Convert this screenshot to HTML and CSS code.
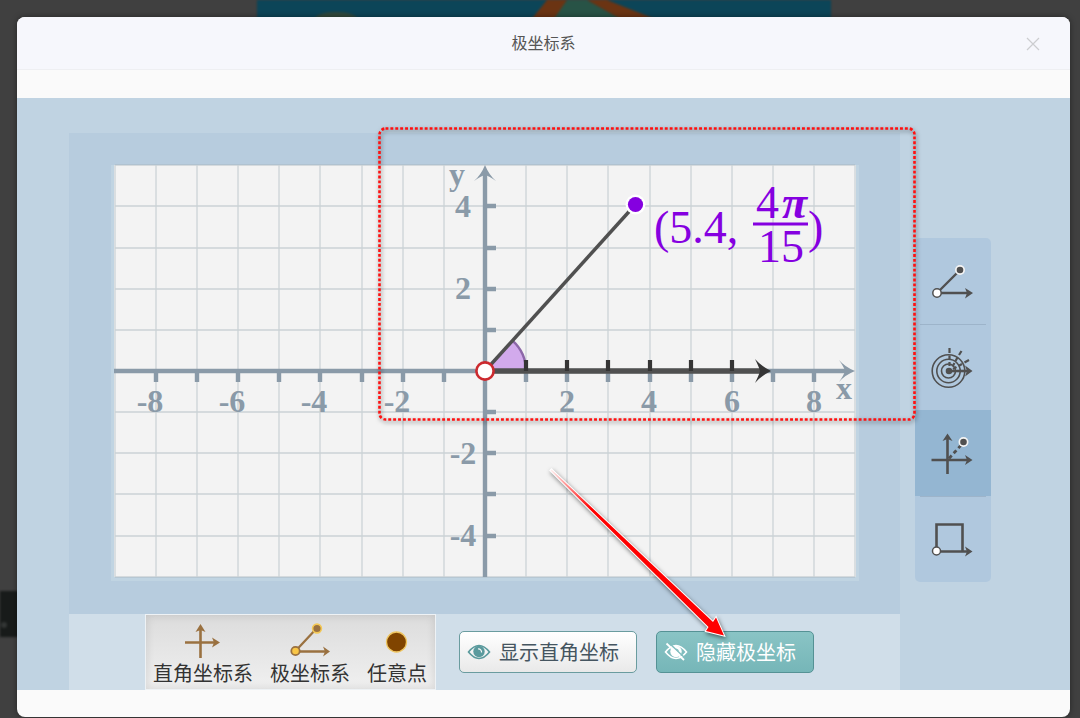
FILE: index.html
```
<!DOCTYPE html>
<html lang="zh-CN">
<head>
  <meta charset="UTF-8">
  <meta name="viewport" content="width=device-width, initial-scale=1">
  <title>极坐标系</title>
  <link rel="stylesheet" href="styles.css">
</head>
<body>
  <!-- dimmed page behind the dialog -->
  <svg class="backdrop" viewBox="0 0 1080 718" preserveAspectRatio="xMidYMin slice" aria-hidden="true">
    <rect x="257" y="-10" width="574" height="60" fill="#0c4558"/>
    <ellipse cx="336" cy="20" rx="22" ry="8" fill="#32493c"/>
    <path d="M567 0H587L640 30H540Z" fill="#285346"/>
    <path d="M547 0H567L542 36H518Z" fill="#6b3413"/>
    <path d="M587 0H607L660 21H624Z" fill="#6b3413"/>
    <rect x="-10" y="591" width="60" height="46" fill="#181b1a"/>
    <circle cx="4" cy="625" r="3" fill="#333635"/>
  </svg>

  <div class="dialog" role="dialog" aria-labelledby="dialogTitle">
    <header class="dialog-header">
      <h1 class="dialog-title" id="dialogTitle">极坐标系</h1>
      <button type="button" class="close-btn" id="closeBtn" aria-label="关闭">
        <svg width="14" height="14" viewBox="0 0 14 14"><path d="M1 1L13 13M13 1L1 13" stroke="#cccdd0" stroke-width="1.2"/></svg>
      </button>
    </header>

    <div class="stage">
      <main class="workspace">
        <div class="board">
          <svg class="chart" viewBox="-374 -206 748 416" role="img" aria-label="坐标系">
            <rect x="-374" y="-206" width="748" height="416" fill="#c0d4e2"/>
            <rect x="-371" y="-206" width="742" height="412" fill="#f3f3f3"/>
            <path class="grid" d="M-370-206V206M-329-206V206M-288-206V206M-247-206V206M-206-206V206M-165-206V206M-123-206V206M-82-206V206M-41-206V206M41-206V206M82-206V206M123-206V206M165-206V206M206-206V206M247-206V206M288-206V206M329-206V206M370-206V206M-370-206H370M-370-165H370M-370-123H370M-370-82H370M-370-41H370M-370 41H370M-370 82H370M-370 123H370M-370 165H370M-370 206H370"/>

            <path class="axis" d="M-371 0H362M0 206V-197"/>
            <path class="axis" d="M-329 0V11M-288 0V11M-247 0V11M-206 0V11M-165 0V11M-123 0V11M-82 0V11M-41 0V11M41 0V11M82 0V11M123 0V11M165 0V11M206 0V11M247 0V11M288 0V11M329 0V11"/>
            <path class="axis" d="M0-165H11M0-123H11M0-82H11M0-41H11M0 41H11M0 82H11M0 123H11M0 165H11"/>
            <path d="M370 0Q360-4 354-11Q359-4 360 0Q359 4 354 11Q360 4 370 0Z" fill="#8a9aa8"/>
            <path d="M0-206Q-4-196-11-190Q-4-195 0-196Q4-195 11-190Q4-196 0-206Z" fill="#8a9aa8"/>

            <g class="axis-label">
              <text x="-335" y="41">-8</text>
              <text x="-253" y="41">-6</text>
              <text x="-171" y="41">-4</text>
              <text x="-88" y="41">-2</text>
              <text x="82" y="41">2</text>
              <text x="164" y="41">4</text>
              <text x="247" y="41">6</text>
              <text x="329" y="41">8</text>
              <text x="359" y="28">x</text>
              <text x="-28" y="-186">y</text>
              <text x="-22" y="-154">4</text>
              <text x="-22" y="-72">2</text>
              <text x="-22" y="93">-2</text>
              <text x="-22" y="175">-4</text>
            </g>

            <!-- angle, polar axis and radius -->
            <path d="M0 0H41A41 41 0 0 0 27.5-30.4Z" fill="#d2aaec"/>
            <path d="M41 0A41 41 0 0 0 27.5-30.4" fill="none" stroke="#8c67a8" stroke-width="2.5"/>
            <path d="M0 0L150-166" stroke="#505050" stroke-width="3.5"/>
            <path d="M0 0H277" stroke="#505050" stroke-width="5.5"/>
            <path d="M41 0V-11M82 0V-11M123 0V-11M165 0V-11M206 0V-11M247 0V-11" stroke="#353535" stroke-width="4.2"/>
            <path d="M286 0Q276-5 270-12Q274-4 275 0Q274 4 270 12Q276 5 286 0Z" fill="#353535"/>
            <circle r="8.6" fill="#fff" stroke="#cc2a2f" stroke-width="2.6"/>
            <circle cx="150.500" cy="-166.500" r="10" fill="#fff"/>
            <circle cx="150.500" cy="-166.500" r="7.600" fill="#8500e0"/>

            <g class="coord">
              <text x="169" y="-128">(5.4,</text>
              <text x="271" y="-153">4<tspan class="pi" x="297">π</tspan></text>
              <path d="M268-147H323" stroke="#8500e0" stroke-width="3"/>
              <text x="273" y="-109">15</text>
              <text x="323" y="-128">)</text>
            </g>
          </svg>
        </div>

        <div class="toolbar">
          <div class="palette">
            <button type="button" class="palette-item">
              <svg width="44" height="40" viewBox="0 0 44 40">
                <path d="M4 24.500H33M19.500 40V11" stroke="#9a7140" stroke-width="2.600"/>
                <path d="M39 24.500L31 19.500L33 24.500L31 29.500ZM19.500 6L14.500 14L19.500 12L24.500 14Z" fill="#9a7140"/>
              </svg>
              直角坐标系
            </button>
            <button type="button" class="palette-item">
              <svg width="44" height="40" viewBox="0 0 44 40">
                <path d="M7.500 33L29 10M7.500 33.500H37" stroke="#9a7140" stroke-width="2.300"/>
                <path d="M42 33.500L35 28.500L37 33.500L35 38.500Z" fill="#9a7140"/>
                <circle cx="7.500" cy="33" r="4.200" fill="#f9c646" stroke="#9a7140" stroke-width="1.800"/>
                <circle cx="29" cy="10.500" r="4.400" fill="#9a7140" stroke="#f4c855" stroke-width="1.600"/>
              </svg>
              极坐标系
            </button>
            <button type="button" class="palette-item">
              <svg width="44" height="40" viewBox="0 0 44 40">
                <circle cx="21.500" cy="24" r="10" fill="#804400" stroke="#efc560" stroke-width="1.300"/>
              </svg>
              任意点
            </button>
          </div>

          <button type="button" class="btn" id="rectBtn">
            <svg class="eye" width="24" height="18" viewBox="0 0 24 18">
              <path d="M1.500 9Q12-4 22.500 9Q12 22 1.500 9Z" fill="none" stroke="currentColor" stroke-width="1.600"/>
              <circle cx="12" cy="8.500" r="5.700" fill="currentColor"/>
              <path d="M11 6A3 3 0 0 1 14.500 9.500" fill="none" stroke="#fafafa" stroke-width="1.200"/>
            </svg>
            显示直角坐标
          </button>
          <button type="button" class="btn btn-active" id="polarBtn">
            <svg class="eye" width="24" height="18" viewBox="0 0 24 18">
              <path d="M1.500 9Q12-4 22.500 9Q12 22 1.500 9Z" fill="none" stroke="currentColor" stroke-width="1.600"/>
              <circle cx="12" cy="8.500" r="5.700" fill="currentColor"/>
              <path d="M12 6A3 3 0 0 1 14.500 8.500" fill="none" stroke="#80bdbe" stroke-width="1.200"/>
              <path d="M4.500-.5L21.500 15.500" stroke="#80bdbe" stroke-width="1.400"/>
              <path d="M2.500 .5L20 17" stroke="currentColor" stroke-width="1.800"/>
            </svg>
            隐藏极坐标
          </button>
        </div>
      </main>

      <nav class="tools" aria-label="工具">
        <button type="button" class="tool" aria-label="极坐标点">
          <svg width="76" height="86" viewBox="0 0 76 86">
            <path d="M22 55L45 32M22 55H53" stroke="#505050" stroke-width="2.400"/>
            <path d="M58 55L50 50L52 55L50 60.500Z" fill="#505050"/>
            <circle cx="22" cy="55" r="4.200" fill="#fff" stroke="#505050" stroke-width="1.500"/>
            <circle cx="45" cy="32" r="5" fill="#f4f4f4"/>
            <circle cx="45" cy="32" r="3.300" fill="#505050"/>
          </svg>
        </button>
        <button type="button" class="tool" aria-label="极坐标网格">
          <svg width="76" height="86" viewBox="0 0 76 86">
            <g fill="none" stroke="#505050">
              <circle cx="33.500" cy="47" r="16.300" stroke-width="1.600"/>
              <circle cx="33.500" cy="47" r="11.700" stroke-width="1.600"/>
              <circle cx="33.500" cy="47" r="7" stroke-width="1.600"/>
              <path d="M34.500 24V29M34.500 31.500V35.500M34.500 38V42M46.500 27L44 31M42.500 33.500L40.500 37M39.500 39L37.500 42.500M54 36L49.500 38.500M47 40L43.500 42M41.500 43L38 45" stroke-width="2.200"/>
              <path d="M34 47H53" stroke-width="2.600"/>
            </g>
            <circle cx="34" cy="47" r="3.300" fill="#505050"/>
            <path d="M57.500 47L50 41.500L52 47L50 52.500Z" fill="#505050"/>
          </svg>
        </button>
        <button type="button" class="tool tool-active" aria-label="直角坐标与极坐标" aria-pressed="true">
          <svg width="76" height="86" viewBox="0 0 76 86">
            <path d="M16.500 50H53M32.500 64V28" stroke="#505050" stroke-width="2.600"/>
            <path d="M57.500 50L50 45L52 50L50 55ZM32.500 23.500L27.500 31L32.500 29L37.500 31Z" fill="#505050"/>
            <path d="M34 48.500L48 33" stroke="#505050" stroke-width="2.800" stroke-dasharray="4 3"/>
            <circle cx="48.500" cy="32" r="5" fill="#f4f4f4"/>
            <circle cx="48.500" cy="32" r="3.300" fill="#505050"/>
          </svg>
        </button>
        <button type="button" class="tool" aria-label="正方形">
          <svg width="76" height="86" viewBox="0 0 76 86">
            <path d="M21.500 55V28.500H47.500V55M21.500 55.500H52" fill="none" stroke="#505050" stroke-width="2.600"/>
            <path d="M57.500 55.500L50 50.500L52 55.500L50 60.500Z" fill="#505050"/>
            <circle cx="21.500" cy="55" r="4" fill="#fff" stroke="#505050" stroke-width="1.500"/>
          </svg>
        </button>
      </nav>

      <!-- highlight box and pointer -->
      <svg class="marks" viewBox="0 0 1053 592" aria-hidden="true">
        <defs>
          <linearGradient id="shaft" gradientUnits="userSpaceOnUse" x1="535" y1="372" x2="575" y2="410">
            <stop offset="0" stop-color="#ffeaea"/>
            <stop offset="1" stop-color="#ff0000"/>
          </linearGradient>
        </defs>
        <rect x="362.500" y="30.500" width="535" height="291" rx="6" fill="none" stroke="#ff1010" stroke-width="2.600" stroke-dasharray="2.900 2"/>
        <path class="pointer" d="M534.500 371.500L696 524L699 519.500L707 537.500L689 533L691.500 529L533.500 372.500Z" fill="url(#shaft)"/>
      </svg>
    </div>
  </div>

  <script>
    const dialog = document.querySelector(".dialog");
    const tools = document.querySelectorAll(".tool");

    document.getElementById("closeBtn").addEventListener("click", () => {
      dialog.hidden = true;
    });

    tools.forEach((tool) => {
      tool.addEventListener("click", () => {
        tools.forEach((t) => t.classList.remove("tool-active"));
        tool.classList.add("tool-active");
      });
    });
  </script>
</body>
</html>
```
FILE: styles.css
```
* {
  box-sizing: border-box;
}

body {
  margin: 0;
  min-height: 100vh;
  padding: 17px 10px 1px 17px;
  display: flex;
  background: #404040;
  font-family: "Noto Sans CJK SC", sans-serif;
}

button {
  font-family: inherit;
  border: none;
  padding: 0;
  background: none;
  cursor: pointer;
}

svg {
  display: block;
}

[hidden] {
  display: none;
}

.backdrop {
  position: absolute;
  inset: 0;
  width: 100%;
  height: 100%;
  filter: blur(1px);
}

.dialog {
  position: relative;
  flex: 1;
  background: #fafafa;
  border-radius: 8px;
  overflow: hidden;
  box-shadow: 0 0 6px rgba(0, 0, 0, 0.4);
}

.dialog-header {
  display: flex;
  align-items: center;
  height: 53px;
  padding: 0 30px;
  background: #f6f7fc;
  border-bottom: 1px solid #eeeff2;
}

.dialog-title {
  flex: 1;
  margin: 0;
  padding: 0 0 2px 14px;
  font-size: 16px;
  font-weight: 400;
  line-height: 24px;
  text-align: center;
  color: #555;
}

.close-btn {
  padding-top: 2px;
}

.stage {
  position: relative;
  display: flex;
  gap: 15px;
  margin-top: 28px;
  padding: 35px 79px 0 52px;
  background: #c0d3e2;
}

.workspace {
  flex: 1;
  min-width: 0;
}

.board {
  padding: 32px 41px 33px 42px;
  background: #b7ccde;
}

.chart {
  width: 100%;
  height: auto;
  overflow: visible;
}

.grid {
  stroke: #a5b4bc;
  stroke-opacity: 0.5;
  stroke-width: 1.3;
}

.axis {
  stroke: #8a9aa8;
  stroke-width: 4.4;
}

.axis-label {
  font: bold 32px "Liberation Serif", serif;
  fill: #8a9aa8;
  text-anchor: middle;
}

.coord {
  font: 46px "Liberation Serif", serif;
  fill: #8500e0;
}

.pi {
  font-style: italic;
  font-weight: bold;
}

.toolbar {
  display: flex;
  align-items: center;
  min-height: 76px;
  padding-left: 76px;
  background: #d0dee9;
}

.palette {
  display: flex;
  align-self: stretch;
  gap: 17px;
  margin-right: 23px;
  padding: 3px 8px 0 7px;
  border: 1px solid #eef2f5;
  background: linear-gradient(#dcdcdc, #f0f0f0);
  box-shadow: inset 0 0 10px rgba(0, 0, 0, 0.12);
}

.palette-item {
  display: flex;
  flex-direction: column;
  align-items: center;
  font-size: 20px;
  line-height: 30px;
  white-space: nowrap;
  color: #333;
}

.palette-item svg {
  overflow: visible;
}

.btn {
  display: flex;
  align-items: center;
  gap: 8px;
  height: 42px;
  margin-right: 19px;
  padding: 0 17px 0 7px;
  border: 1px solid #6a9c9f;
  border-radius: 5px;
  background: linear-gradient(#ffffff, #e9e9e9);
  font-size: 20px;
  line-height: 30px;
  white-space: nowrap;
  color: #455560;
}

.eye {
  color: #5a9a9d;
  overflow: visible;
}

.btn-active {
  border-color: #559295;
  background: linear-gradient(#8ac4c5, #76b6b8);
  color: #fff;
}

.btn-active .eye {
  color: #fff;
}

.tools {
  align-self: flex-start;
  margin-top: 105px;
  border-radius: 5px;
  overflow: hidden;
  background: #b0c8de;
}

.tool {
  display: block;
}

.tool + .tool {
  background: linear-gradient(#9db4ca, #9db4ca) center top / 66px 1px no-repeat;
}

.tool.tool-active {
  background: #94b6d2;
}

.marks {
  position: absolute;
  inset: 0;
  width: 100%;
  height: 100%;
  pointer-events: none;
  filter: drop-shadow(1px 2px 2px rgba(0, 0, 0, 0.5));
}

.pointer {
  stroke: #fff;
  stroke-width: 2;
  paint-order: stroke;
}
```
